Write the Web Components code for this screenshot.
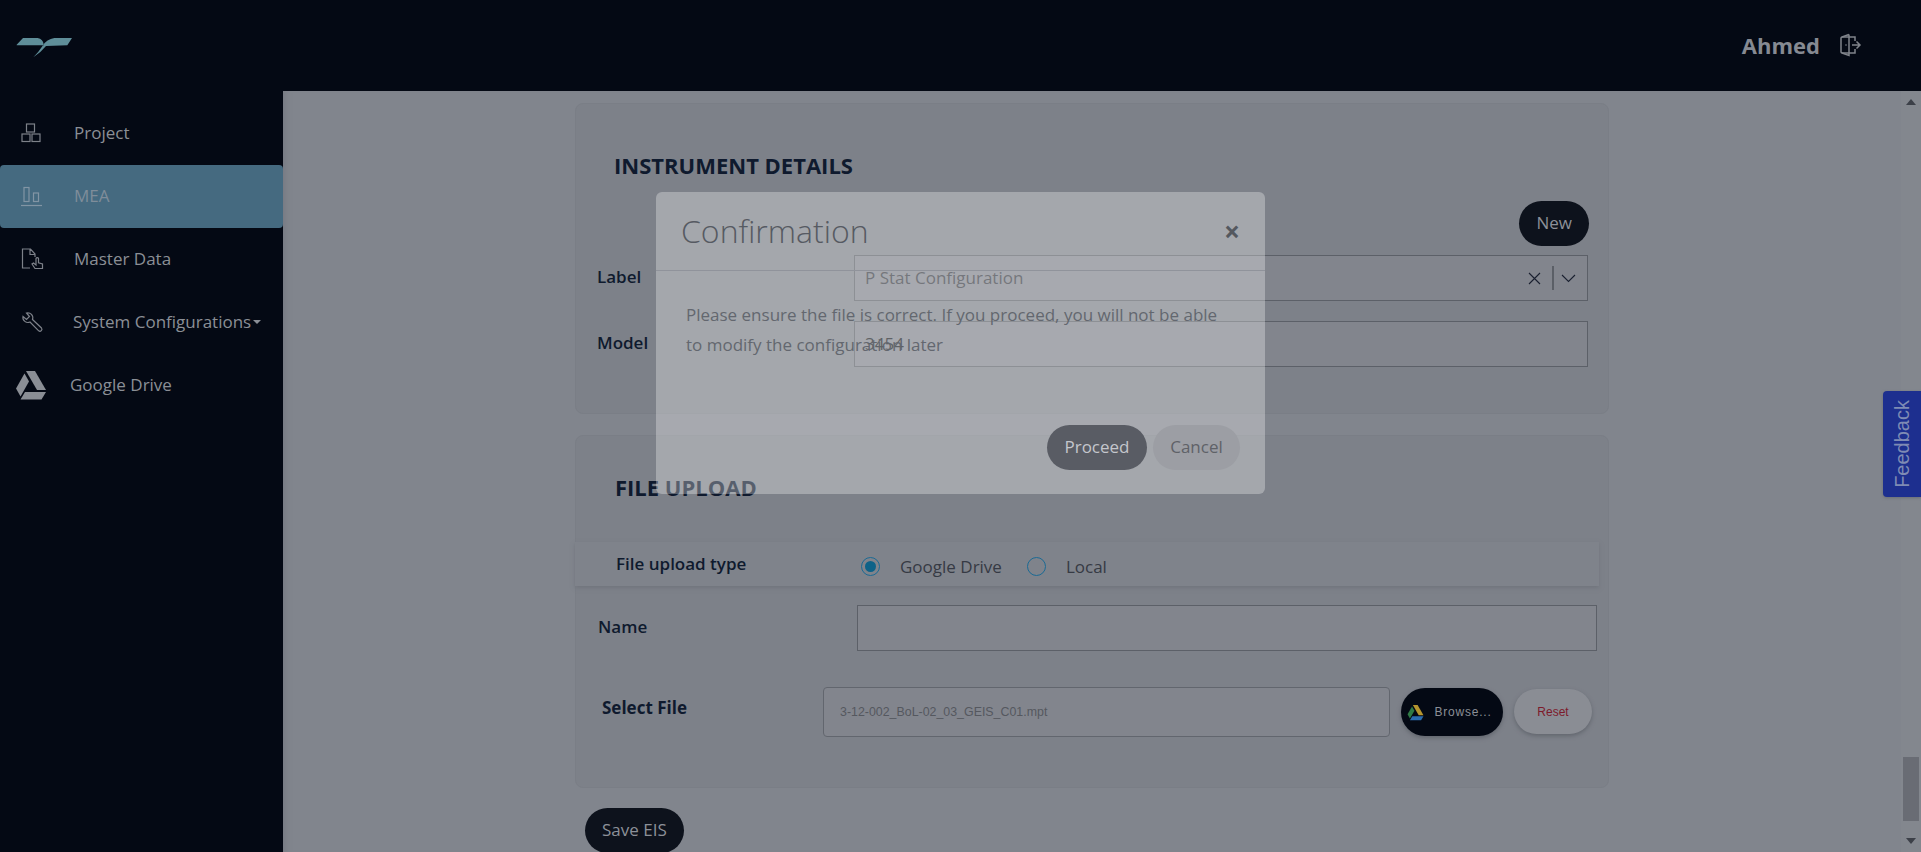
<!DOCTYPE html>
<html lang="en">
<head>
<meta charset="utf-8">
<title>MEA</title>
<style>
  html, body { margin: 0; height: 852px; overflow: hidden; background: #81858d; }
  body { font-family: "Open Sans", sans-serif; color: #0f1a2e; }
  .page { position: relative; display: grid; grid-template-columns: 283px 1fr; grid-template-rows: 91px 761px; width: 1921px; height: 852px; overflow: hidden; }
  top-bar { grid-column: 1 / 3; }
</style>
</head>
<body>
<div class="page">
  <top-bar user="Ahmed"></top-bar>
  <side-nav></side-nav>
  <main-area>
    <form-card heading="INSTRUMENT DETAILS" pad="49" card-height="311" card-gap="21">
      <div style="display:flex;justify-content:flex-end;padding:22px 19px 0 0"><pill-button>New</pill-button></div>
      <field-row label="Label" value="P Stat Configuration" select top="9"></field-row>
      <field-row label="Model" value="3454" top="20"></field-row>
    </form-card>
    <form-card heading="FILE UPLOAD" pad="39" heading-left="40" card-height="353" card-gap="20">
      <upload-type></upload-type>
      <field-row label="Name" value="" top="19" left="22" label-width="259" input-width="740"></field-row>
      <file-row name="3-12-002_BoL-02_03_GEIS_C01.mpt"></file-row>
    </form-card>
    <div style="padding-left:10px"><pill-button>Save EIS</pill-button></div>
  </main-area>
  <feedback-tab>Feedback</feedback-tab>
  <confirm-dialog heading="Confirmation">Please ensure the file is correct. If you proceed, you will not be able to modify the configuration later</confirm-dialog>
</div>

<script>
// small helper so every class does not repeat the same two lines
class Base extends HTMLElement {
  constructor () {
    super()
    this.attachShadow({ mode: 'open' })
  }
  render (html) {
    this.shadowRoot.innerHTML = html
  }
}

const DRIVE_PATH_TOP = 'M11 1h9l11 19h-9z'
const DRIVE_PATH_LEFT = 'M9.500 3.500l4.500 8-8.500 15-4.500-8z'
const DRIVE_PATH_BOTTOM = 'M10 22h21l-4.500 7.500h-21z'

class TopBar extends Base {
  connectedCallback () {
    this.render(`
    <style>
      :host { display: flex; align-items: center; justify-content: space-between; background: #040914; height: 91px; }
      .logo { display: block; margin-top: -11px; }
      .right { display: flex; align-items: center; gap: 19px; padding-right: 59px; }
      .user { font: 700 22px "Open Sans", sans-serif; color: #868a92; margin-top: -2px; }
      svg.out { display: block; margin-top: -2px; }
    </style>
    <svg class="logo" width="100" height="60" viewBox="0 0 300 180">
      <path fill="#5f8e99" d="M50 104 L69 84 H113 Q129 86 132 106 L50 106 Z M216 84 H163 Q140 88 128 107 Q117 124 100 142 Q122 128 138 108 L202 106 Z"/>
    </svg>
    <div class="right">
      <span class="user">${this.getAttribute('user')}</span>
      <svg class="out" width="23" height="24" viewBox="0 0 23 24" fill="none" stroke="#80848b" stroke-width="1.500">
        <path d="M10 4H3a1.500 1.500 0 0 0-1 1v14a1.500 1.500 0 0 0 1 1h7"/>
        <path d="M10 1.500 V22.500 L3 20 M10 1.500 L3 4" />
        <path d="M13 12h8M17.500 8.500L21 12l-3.500 3.500M10 4h6v4M10 20h6v-4"/>
        <circle cx="7" cy="12" r=".8" fill="#80848b" stroke="none"/>
      </svg>
    </div>`)
  }
}

class SideNav extends Base {
  connectedCallback () {
    const stroke = 'fill="none" stroke="#7d8189" stroke-width="1.200"'
    this.render(`
    <style>
      :host { display: block; background: #040914; padding-top: 11px; height: 750px; }
    </style>
    <nav-item label="Project">
      <svg slot="icon" width="22" height="22" viewBox="0 0 22 22" ${stroke}>
        <rect x="6.500" y="2" width="8" height="8"/><rect x="2" y="12" width="8" height="7.500"/><rect x="12" y="12" width="8" height="7.500"/>
      </svg>
    </nav-item>
    <nav-item label="MEA" active>
      <svg slot="icon" width="24" height="22" viewBox="0 0 24 22" fill="none" stroke="#8295a4" stroke-width="1.200">
        <rect x="4" y="2.500" width="5" height="14"/><rect x="13.500" y="8" width="5" height="8.500"/><path d="M1 20.500h21"/>
      </svg>
    </nav-item>
    <nav-item label="Master Data">
      <svg slot="icon" width="24" height="24" viewBox="0 0 24 24" ${stroke}>
        <path d="M10 21H2.500V2h8l4.500 5v3M10 2.500V7.500h5"/>
        <path d="M12 17l3 4.500h7.500v-4.500l-4-1.200V11.500a1.300 1.300 0 0 0-2.500 0V18l-2.500-2z" fill="#040914"/>
      </svg>
    </nav-item>
    <nav-item label="System Configurations" caret>
      <svg slot="icon" width="24" height="24" viewBox="0 0 24 24" ${stroke}>
        <path d="M3 6.500l3.500 3 3-3-3-3.500a5 5 0 0 1 6 6.500L21.500 18a2 2 0 0 1-2.800 2.800L10 12a5 5 0 0 1-7-5.500z"/>
      </svg>
    </nav-item>
    <nav-item label="Google Drive" drive>
      <svg slot="icon" width="32" height="30" viewBox="0 0 32 30" fill="#8a8e95">
        <path d="${DRIVE_PATH_TOP}"/><path d="${DRIVE_PATH_LEFT}"/><path d="${DRIVE_PATH_BOTTOM}"/>
      </svg>
    </nav-item>`)
  }
}

class NavItem extends Base {
  connectedCallback () {
    const active = this.hasAttribute('active')
    const drive = this.hasAttribute('drive')
    const hasCaret = this.hasAttribute('caret')
    const caret = hasCaret ? '<span class="caret"></span>' : ''
    this.render(`
    <style>
      :host { display: flex; align-items: center; height: 63px; box-sizing: border-box; border-radius: 4px;
        padding: 0 0 2px ${drive ? 15 : 20}px;
        background: ${active ? '#456a80' : 'transparent'};
        color: ${active ? '#7f8d9a' : '#8b8f96'};
        font: 400 17px "Open Sans", sans-serif; }
      .icon { display: flex; width: ${drive ? 55 : hasCaret ? 53 : 54}px; }
      .caret { width: 0; height: 0; margin: 1px 0 0 2px; border: 4px solid transparent; border-top-color: #8b8f96; border-bottom: 0; }
    </style>
    <span class="icon"><slot name="icon"></slot></span>
    <span>${this.getAttribute('label')}</span>${caret}`)
  }
}

class MainArea extends Base {
  connectedCallback () {
    this.render(`
    <style>
      :host { display: flex; height: 761px; overflow: hidden; box-shadow: inset 8px 0 8px -8px #6f737b; }
      .scroll { flex: 1; padding: 12px 0 0 292px; box-sizing: border-box; }
      .bar { width: 20px; flex: none; display: flex; flex-direction: column; align-items: center; background: #83878e; }
      .arrow { width: 0; height: 0; border: 5px solid transparent; }
      .up { margin-top: 8px; border-bottom: 6px solid #3c4048; border-top: 0; }
      .thumb { margin-top: 652px; width: 16px; height: 64px; background: #696c74; }
      .down { margin-top: 17px; border-top: 6px solid #3c4048; border-bottom: 0; }
    </style>
    <div class="scroll"><slot></slot></div>
    <div class="bar"><span class="arrow up"></span><span class="thumb"></span><span class="arrow down"></span></div>`)
  }
}

class FormCard extends Base {
  connectedCallback () {
    const pad = this.getAttribute('pad')
    const left = this.getAttribute('heading-left') || 39
    this.render(`
    <style>
      :host { display: block; width: 1034px; height: ${this.getAttribute('card-height')}px; box-sizing: border-box;
        margin-bottom: ${this.getAttribute('card-gap')}px; background: #7d8189; border-radius: 8px;
        border: 1px solid #7a7e86; padding-top: ${pad - 1}px; }
      h2 { margin: 0 0 0 ${left - 1}px; font: 700 22px/27px "Open Sans", sans-serif; color: #0f1a2e; }
    </style>
    <h2>${this.getAttribute('heading')}</h2>
    <slot></slot>`)
  }
}

class FieldRow extends Base {
  connectedCallback () {
    const labelWidth = this.getAttribute('label-width') || 257
    const inputWidth = this.getAttribute('input-width') || 734
    const isSelect = this.hasAttribute('select')
    const controls = isSelect
      ? `<svg width="62" height="26" viewBox="0 0 62 26" fill="none" stroke="#1a2030" stroke-width="1.100">
          <path d="M5 8l11 11M16 8L5 19"/><path d="M29 1v24" stroke="#3c4048"/><path d="M38 10l6.500 6.500L51 10"/>
        </svg>`
      : ''
    this.render(`
    <style>
      :host { display: flex; align-items: center; margin-top: ${this.getAttribute('top')}px; padding-left: ${this.getAttribute('left') || 21}px; font: 600 17px "Open Sans", sans-serif; color: #0f1a2e; }
      .label { width: ${labelWidth}px; flex: none; margin-top: -3px; }
      .input { display: flex; align-items: center; justify-content: space-between; width: ${inputWidth}px; height: 46px; box-sizing: border-box;
        border: 1px solid #5c6068; background: #82858d; padding-left: 10px; font-weight: 400; color: ${isSelect ? '#3a3d45' : '#1a1d24'}; }
      .input span { margin-top: -2px; }
      svg { margin-right: 1px; }
    </style>
    <span class="label">${this.getAttribute('label')}</span>
    <div class="input"><span>${this.getAttribute('value')}</span>${controls}</div>`)
  }
}

class UploadType extends Base {
  connectedCallback () {
    this.render(`
    <style>
      :host { display: flex; align-items: center; width: 1024px; height: 44px; margin: 41px 0 0 -1px; box-sizing: border-box; padding: 5px 0 0 41px;
        background: #7f838b; box-shadow: 0 2px 4px #71757d; font: 400 17px "Open Sans", sans-serif; color: #363a44; }
      .title { width: 245px; font-weight: 600; color: #0f1a2e; margin-top: -7px; }
      .opt { display: flex; align-items: center; }
      .radio { width: 19px; height: 19px; box-sizing: border-box; border: 1px solid #1b6a94; border-radius: 50%; margin-right: 20px; display: flex; align-items: center; justify-content: center; }
      .radio i { width: 11px; height: 11px; border-radius: 50%; background: #0d6288; }
      .opt + .opt { margin-left: 25px; }
    </style>
    <span class="title">File upload type</span>
    <span class="opt"><span class="radio"><i></i></span>Google Drive</span>
    <span class="opt"><span class="radio"></span>Local</span>`)
  }
}

class FileRow extends Base {
  connectedCallback () {
    this.render(`
    <style>
      :host { display: flex; align-items: center; margin-top: 36px; padding-left: 26px; }
      .label { width: 221px; font: 700 17px "Open Sans", sans-serif; color: #0f1a2e; margin-top: -9px; }
      .box { width: 567px; height: 50px; box-sizing: border-box; border: 1px solid #62666e; border-radius: 4px; background: #82858d;
        display: flex; align-items: center; padding-left: 16px; font: 12.400px "Liberation Sans", sans-serif; color: #55585f; }
      .browse, .reset { display: flex; align-items: center; justify-content: center; font: 12px "Liberation Sans", sans-serif; letter-spacing: .8px; border-radius: 24px; box-shadow: 0 2px 4px #62666e; }
      .browse { width: 102px; height: 48px; box-sizing: border-box; padding-right: 5px; margin-left: 11px; gap: 10px; background: #040914; color: #8b8f96; }
      .reset { width: 78px; height: 45px; margin: -1px 0 0 11px; background: #8a8d94; color: #7d1a2b; letter-spacing: 0; }
    </style>
    <span class="label">Select File</span>
    <div class="box">${this.getAttribute('name')}</div>
    <div class="browse">
      <svg width="17" height="17" viewBox="0 0 32 30">
        <path fill="#b5952e" d="${DRIVE_PATH_TOP}"/><path fill="#2f7a45" d="${DRIVE_PATH_LEFT}"/><path fill="#2a6cb0" d="${DRIVE_PATH_BOTTOM}"/>
      </svg>
      <span>Browse...</span>
    </div>
    <div class="reset">Reset</div>`)
  }
}

class PillButton extends Base {
  connectedCallback () {
    this.render(`
    <style>
      :host { display: inline-flex; align-items: center; height: 45px; box-sizing: border-box; padding: 0 17px 2px; border-radius: 23px;
        background: #0d121c; color: #8c9098; font: 400 17px "Open Sans", sans-serif; }
    </style>
    <slot></slot>`)
  }
}

class FeedbackTab extends Base {
  connectedCallback () {
    this.render(`
    <style>
      :host { position: absolute; left: 1883px; top: 391px; width: 38px; height: 106px; background: #1d2f8f; border-radius: 4px 0 0 4px;
        box-shadow: 0 1px 3px #6a6e76; display: flex; align-items: center; justify-content: center; }
      span { writing-mode: vertical-rl; transform: rotate(180deg); font: 20px "Liberation Sans", sans-serif; color: #7f8bb4; }
    </style>
    <span><slot></slot></span>`)
  }
}

class ConfirmDialog extends Base {
  connectedCallback () {
    this.render(`
    <style>
      :host { position: absolute; left: 656px; top: 192px; width: 609px; height: 302px; box-sizing: border-box; display: flex; flex-direction: column;
        background: rgba(255, 255, 255, .3); border-radius: 6px; color: #63676f; font: 400 17px "Open Sans", sans-serif; }
      header { display: flex; align-items: center; justify-content: space-between; height: 79px; flex: none; box-sizing: border-box; padding: 0 25px 1px 25px; border-bottom: 1px solid #90939b; }
      h1 { margin: 0; font: 300 32px "Open Sans", sans-serif; color: #565a62; }
      .close { font: 700 28px/1 "Open Sans", sans-serif; color: #54585f; }
      .body { flex: 1; padding: 29px 36px 0 30px; line-height: 30px; }
      footer { display: flex; justify-content: flex-end; gap: 6px; padding: 0 25px 24px 0; }
      button { height: 45px; border: 0; border-radius: 23px; font: 400 17px "Open Sans", sans-serif; padding: 0 0 3px; }
      .ok { width: 100px; background: #595c64; color: #c4c6cc; }
      .no { width: 87px; background: #9c9ea4; color: #5f6268; }
    </style>
    <header><h1>${this.getAttribute('heading')}</h1><span class="close">×</span></header>
    <div class="body"><slot></slot></div>
    <footer><button class="ok">Proceed</button><button class="no">Cancel</button></footer>`)
  }
}

customElements.define('top-bar', TopBar)
customElements.define('side-nav', SideNav)
customElements.define('nav-item', NavItem)
customElements.define('main-area', MainArea)
customElements.define('form-card', FormCard)
customElements.define('field-row', FieldRow)
customElements.define('upload-type', UploadType)
customElements.define('file-row', FileRow)
customElements.define('pill-button', PillButton)
customElements.define('feedback-tab', FeedbackTab)
customElements.define('confirm-dialog', ConfirmDialog)
</script>
</body>
</html>
